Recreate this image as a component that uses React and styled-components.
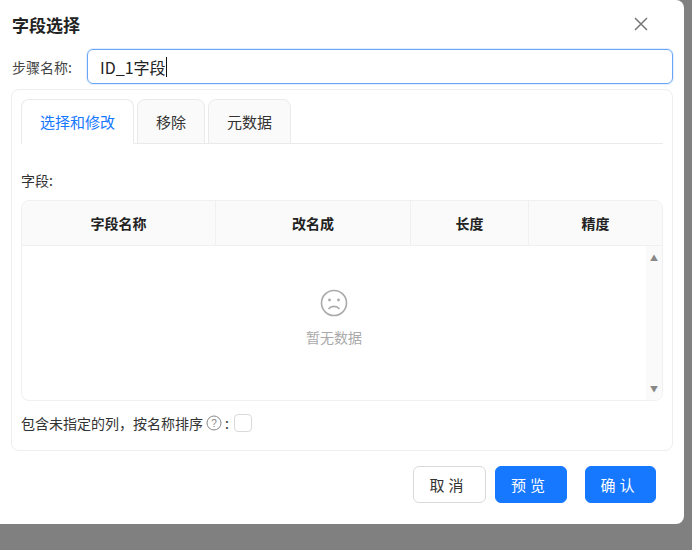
import React from 'react';
import styled, { createGlobalStyle } from 'styled-components';

const Global = createGlobalStyle`
  body {
    margin: 0;
    background: #808080;
    font-family: "Noto Sans CJK SC", "Noto Sans", sans-serif;
    color: #333;
  }
`;

const Modal = styled.div`
  width: 684px;
  height: 524px;
  background: #fff;
  border-radius: 0 8px 8px 0;
  box-sizing: border-box;
  padding: 10px 11px 0 11px;
  display: flex;
  flex-direction: column;
`;

const Header = styled.div`
  display: flex;
  justify-content: space-between;
  align-items: center;
  height: 28px;
`;

const Title = styled.div`
  font-size: 17px;
  font-weight: bold;
  color: #222;
  padding-left: 1px;
`;

const Close = styled.div`
  width: 24px;
  height: 24px;
  margin-right: 20px;
  display: flex;
  align-items: center;
  justify-content: center;
`;

const NameRow = styled.div`
  display: flex;
  align-items: center;
  margin-top: 11px;
`;

const Label = styled.span`
  font-size: 14px;
  color: #444;
  width: 75px;
  padding-left: 1px;
`;

const Input = styled.div`
  flex: 1;
  height: 35px;
  box-sizing: border-box;
  border: 1px solid #6aa6f5;
  border-radius: 6px;
  box-shadow: 0 0 0 1px rgba(24,119,255,0.12);
  padding: 0 12px;
  display: flex;
  align-items: center;
  font-size: 16px;
  color: #222;
`;

const Caret = styled.span`
  display: inline-block;
  width: 1px;
  height: 20px;
  background: #111;
`;

const Panel = styled.div`
  margin-top: 5px;
  height: 362px;
  border: 1px solid #eee;
  border-radius: 8px;
  box-sizing: border-box;
  padding: 9px 9px 0 9px;
  display: flex;
  flex-direction: column;
`;

const Tabs = styled.div`
  display: flex;
  gap: 3px;
  border-bottom: 1px solid #eaeaea;
  height: 45px;
  box-sizing: border-box;
`;

const Tab = styled.div`
  height: 45px;
  box-sizing: border-box;
  padding: 0 ${p => p.$pad}px;
  display: flex;
  align-items: center;
  font-size: 15px;
  border: 1px solid #eaeaea;
  border-radius: 8px 8px 0 0;
  background: ${p => (p.$active ? '#fff' : '#fafafa')};
  color: ${p => (p.$active ? '#1677ff' : '#333')};
  border-bottom-color: ${p => (p.$active ? '#fff' : '#eaeaea')};
`;

const FieldLabel = styled.div`
  font-size: 14px;
  margin-top: 26px;
  height: 20px;
  color: #333;
`;

const Table = styled.div`
  margin-top: 10px;
  border: 1px solid #f0f0f0;
  border-radius: 8px;
  height: 199px;
  display: flex;
  flex-direction: column;
  overflow: hidden;
`;

const HeadRow = styled.div`
  display: grid;
  grid-template-columns: 194px 195px 118px 1fr;
  height: 44px;
  background: #fafafa;
  border-bottom: 1px solid #f0f0f0;
`;

const Th = styled.div`
  display: flex;
  align-items: center;
  justify-content: center;
  font-size: 14px;
  font-weight: bold;
  color: #222;
  border-right: ${p => (p.$last ? 'none' : '1px solid #f0f0f0')};
`;

const Body = styled.div`
  flex: 1;
  display: flex;
`;

const Empty = styled.div`
  flex: 1;
  display: flex;
  flex-direction: column;
  align-items: center;
  justify-content: center;
  gap: 10px;
  color: #aaa;
  font-size: 14px;
  padding-bottom: 10px;
`;

const Scroll = styled.div`
  width: 16px;
  background: #fafafa;
  display: flex;
  flex-direction: column;
  justify-content: space-between;
  align-items: center;
  padding: 6px 0 6px;
  color: #888;
  font-size: 8px;
`;

const CheckRow = styled.div`
  display: flex;
  align-items: center;
  margin-top: 12px;
  font-size: 14px;
  color: #333;
  gap: 3px;
`;

const Box = styled.span`
  width: 16px;
  height: 16px;
  border: 1px solid #d9d9d9;
  border-radius: 4px;
  margin-left: 2px;
`;

const Footer = styled.div`
  display: flex;
  justify-content: flex-end;
  gap: 9px;
  margin-top: 15px;
  padding-right: 17px;
`;

const Button = styled.button`
  height: 37px;
  width: ${p => p.$w}px;
  border-radius: 6px;
  font-family: inherit;
  font-size: 15px;
  letter-spacing: 4px;
  padding-left: 4px;
  margin-left: ${p => p.$ml || 0}px;
  border: 1px solid ${p => (p.$primary ? '#1677ff' : '#d9d9d9')};
  background: ${p => (p.$primary ? '#1677ff' : '#fff')};
  color: ${p => (p.$primary ? '#fff' : '#333')};
`;

export default function App() {
  return (
    <>
      <Global />
      <Modal>
        <Header>
          <Title>字段选择</Title>
          <Close>
            <svg width="16" height="16" viewBox="0 0 16 16">
              <path d="M2 2L14 14M14 2L2 14" stroke="#777" strokeWidth="1.5" />
            </svg>
          </Close>
        </Header>
        <NameRow>
          <Label>步骤名称:</Label>
          <Input>ID_1字段<Caret /></Input>
        </NameRow>
        <Panel>
          <Tabs>
            <Tab $active $pad={18}>选择和修改</Tab>
            <Tab $pad={18}>移除</Tab>
            <Tab $pad={18}>元数据</Tab>
          </Tabs>
          <FieldLabel>字段:</FieldLabel>
          <Table>
            <HeadRow>
              <Th>字段名称</Th>
              <Th>改名成</Th>
              <Th>长度</Th>
              <Th $last>精度</Th>
            </HeadRow>
            <Body>
              <Empty>
                <svg width="28" height="28" viewBox="0 0 28 28">
                  <circle cx="14" cy="14" r="12.5" fill="none" stroke="#aaa" strokeWidth="1.6" />
                  <circle cx="9.5" cy="11" r="1.4" fill="#aaa" />
                  <circle cx="18.5" cy="11" r="1.4" fill="#aaa" />
                  <path d="M8.5 20c2.8-3.5 8.2-3.5 11 0" fill="none" stroke="#aaa" strokeWidth="1.6" />
                </svg>
                暂无数据
              </Empty>
              <Scroll>
                <span>▲</span>
                <span>▼</span>
              </Scroll>
            </Body>
          </Table>
          <CheckRow>
            包含未指定的列，按名称排序
            <svg width="16" height="16" viewBox="0 0 16 16">
              <circle cx="8" cy="8" r="7" fill="none" stroke="#888" />
              <text x="8" y="11.5" fontSize="10" textAnchor="middle" fill="#888" fontFamily="Liberation Sans, sans-serif">?</text>
            </svg>
            :<Box />
          </CheckRow>
        </Panel>
        <Footer>
          <Button $w={73}>取消</Button>
          <Button $w={72} $primary>预览</Button>
          <Button $w={71} $primary $ml={9}>确认</Button>
        </Footer>
      </Modal>
    </>
  );
}
